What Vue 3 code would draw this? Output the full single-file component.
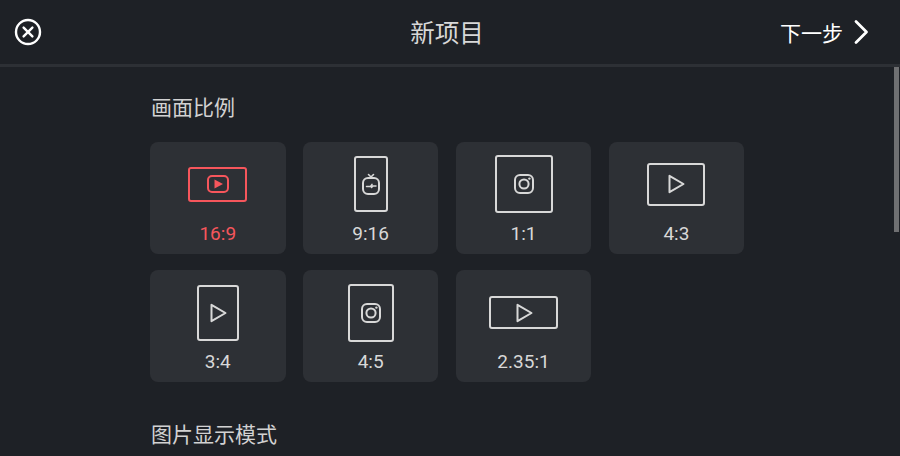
<template>
  <div class="page">
    <header class="top-bar">
      <button class="close-btn" aria-label="关闭">
        <svg width="28" height="28" viewBox="0 0 28 28" fill="none" stroke="#fff" stroke-width="2.4" stroke-linecap="round">
          <circle cx="14" cy="14" r="12" />
          <path d="M9.6 9.6l8.8 8.8M18.4 9.6l-8.8 8.8" />
        </svg>
      </button>
      <h1 class="title">新项目</h1>
      <button class="next-btn">
        <span>下一步</span>
        <svg width="16" height="26" viewBox="0 0 16 26" fill="none" stroke="#fff" stroke-width="2.8" stroke-linecap="round" stroke-linejoin="round">
          <path d="M3 2.5L13.5 13L3 23.5" />
        </svg>
      </button>
    </header>

    <main class="content">
      <h2 class="section-label">画面比例</h2>
      <div class="ratio-grid">
        <div v-for="item in ratios" :key="item.label" class="ratio-card" :class="{ active: item.active }">
          <div class="icon-area">
            <div class="frame" :style="{ width: item.w + 'px', height: item.h + 'px' }">
              <svg v-if="item.kind === 'youtube'" width="24" height="24" viewBox="0 0 24 24" fill="none" stroke="currentColor" stroke-width="2">
                <rect x="2" y="4" width="20" height="16" rx="4" />
                <path d="M8.5 7.5l8.5 4.5-8.5 4.5z" fill="currentColor" stroke="none" />
              </svg>
              <svg v-else-if="item.kind === 'igtv'" width="24" height="28" viewBox="0 0 24 28" fill="none" stroke="currentColor" stroke-width="2" stroke-linecap="round" stroke-linejoin="round">
                <rect x="4" y="8" width="16" height="16" rx="5" />
                <path d="M9.5 4.5L12 7l2.5-2.5" stroke-width="1.6" />
                <path d="M7.5 16.5h4l1.5-2.2-.5 3.2 1.5-1.5h3" stroke-width="1.5" />
              </svg>
              <svg v-else-if="item.kind === 'insta'" width="24" height="24" viewBox="0 0 24 24" fill="none" stroke="currentColor" stroke-width="2">
                <rect x="3" y="3" width="18" height="18" rx="5" />
                <circle cx="12" cy="12" r="4.6" />
                <circle cx="17.4" cy="6.6" r="1.2" fill="currentColor" stroke="none" />
              </svg>
              <svg v-else width="24" height="24" viewBox="0 0 24 24" fill="none" stroke="currentColor" stroke-width="2" stroke-linejoin="round">
                <path d="M5.5 3.8v16.4L19.5 12z" />
              </svg>
            </div>
          </div>
          <span class="ratio-name">{{ item.label }}</span>
        </div>
      </div>
      <h2 class="section-label second">图片显示模式</h2>
    </main>

    <div class="scroll-thumb"></div>
  </div>
</template>

<script setup>
const ratios = [
  { label: '16:9', w: 59, h: 35, kind: 'youtube', active: true },
  { label: '9:16', w: 34, h: 56, kind: 'igtv' },
  { label: '1:1', w: 58, h: 58, kind: 'insta' },
  { label: '4:3', w: 58, h: 43, kind: 'play' },
  { label: '3:4', w: 42, h: 56, kind: 'play' },
  { label: '4:5', w: 46, h: 58, kind: 'insta' },
  { label: '2.35:1', w: 69, h: 33, kind: 'play' },
]
</script>

<style>
html,
body {
  margin: 0;
  background: #1e2126;
}
</style>

<style scoped>
.page {
  position: relative;
  width: 900px;
  height: 456px;
  overflow: hidden;
  background: #1e2126;
  font-family: Roboto, "Noto Sans CJK SC", sans-serif;
}

.top-bar {
  height: 64px;
  border-bottom: 3px solid #2d3035;
  display: grid;
  grid-template-columns: 1fr auto 1fr;
  align-items: center;
  padding: 0 20px 0 14px;
}

.close-btn,
.next-btn {
  display: flex;
  align-items: center;
  padding: 0;
  border: none;
  background: none;
  color: #fff;
  font: inherit;
}

.title {
  margin: 0 0 2px;
  color: #d8d8d8;
  font-size: 24.5px;
  font-weight: 400;
}

.next-btn {
  justify-self: end;
  gap: 10px;
  margin-right: 11px;
  font-size: 21px;
}

.content {
  padding: 0 155.8px 0 150px;
}

.section-label {
  margin: 0;
  padding: 27px 0 0 1px;
  height: 29px;
  line-height: 29px;
  color: #d2d2d2;
  font-size: 21px;
  font-weight: 400;
}

.ratio-grid {
  display: grid;
  grid-template-columns: repeat(4, 135.5px);
  grid-auto-rows: 111.5px;
  gap: 16.9px 17.4px;
  margin-top: 19px;
}

.ratio-card {
  display: flex;
  flex-direction: column;
  align-items: center;
  border-radius: 8px;
  background: #2d3035;
  color: #d8d8d8;
}

.ratio-card.active {
  color: #f6565c;
}

.icon-area {
  height: 84.4px;
  display: flex;
  align-items: center;
  justify-content: center;
}

.frame {
  box-sizing: border-box;
  display: flex;
  align-items: center;
  justify-content: center;
  border: 2px solid currentColor;
  border-radius: 3px;
}

.ratio-name {
  margin-top: -3.4px;
  line-height: 22px;
  font-size: 19px;
}

.section-label.second {
  padding-top: 39.6px;
}

.scroll-thumb {
  position: absolute;
  top: 67px;
  right: 1px;
  width: 5px;
  height: 165px;
  background: #6f7072;
}
</style>
